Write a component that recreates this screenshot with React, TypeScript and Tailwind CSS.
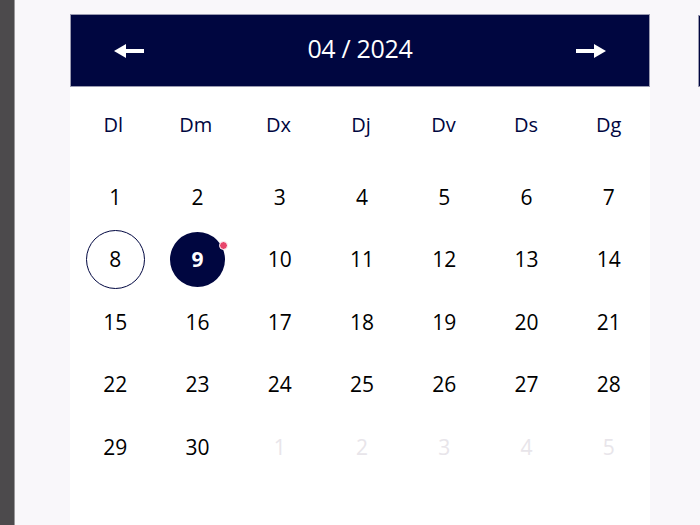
import React from "react";

const weekdays = ["Dl", "Dm", "Dx", "Dj", "Dv", "Ds", "Dg"];

type Cell = { d: number; muted?: boolean };

const cells: Cell[] = [];
for (let i = 1; i <= 30; i++) cells.push({ d: i });
for (let i = 1; i <= 5; i++) cells.push({ d: i, muted: true });

function LeftArrow() {
  return (
    <svg width="32" height="16" viewBox="0 0 32 16">
      <polygon points="0,8 12,1 12,15" fill="#fff" />
      <rect x="10" y="6" width="20" height="4" fill="#fff" />
    </svg>
  );
}

function RightArrow() {
  return (
    <svg width="32" height="16" viewBox="0 0 32 16">
      <polygon points="32,8 20,1 20,15" fill="#fff" />
      <rect x="2" y="6" width="20" height="4" fill="#fff" />
    </svg>
  );
}

export default function App() {
  return (
    <div
      className="w-[700px] h-[525px] overflow-hidden flex bg-[#f9f7fa] relative"
      style={{ fontFamily: '"Open Sans", "Noto Sans", sans-serif' }}
    >
      <div className="w-[15px] h-full bg-[#4c4a4c] border-r border-[#9a989a] shrink-0" />
      <div className="w-[55px] shrink-0" />
      <div className="w-[580px] shrink-0 flex flex-col mt-[14px]">
        <div className="h-[73px] bg-[#000640] border border-[#9a9ab0] flex items-center justify-between px-[43px]">
          <LeftArrow />
          <span className="text-white text-[25px] leading-none tracking-[-0.3px] mt-[-4px]">04 / 2024</span>
          <RightArrow />
        </div>
        <div className="flex-1 bg-white">
          <div className="grid grid-cols-7 h-[76px] items-center pl-[2px]">
            {weekdays.map((w) => (
              <div key={w} className="text-center text-[20px] text-[#000640]">
                {w}
              </div>
            ))}
          </div>
          <div className="grid grid-cols-7 auto-rows-[62.5px] pt-[3px] pl-[4px]">
            {cells.map((c, i) => {
              const isEight = !c.muted && c.d === 8;
              const isNine = !c.muted && c.d === 9;
              return (
                <div key={i} className="flex items-center justify-center">
                  {isEight ? (
                    <div className="w-[59px] h-[59px] rounded-full border-[1.5px] border-[#000640] flex items-center justify-center text-[21px] text-black">
                      8
                    </div>
                  ) : isNine ? (
                    <div className="relative w-[55px] h-[55px] rounded-full bg-[#000640] flex items-center justify-center text-[21px] font-bold text-white">
                      9
                      <span className="absolute right-[-3px] top-[9px] w-[9px] h-[9px] rounded-full bg-[#e8456b] border border-white" />
                    </div>
                  ) : (
                    <span className={"text-[21px] " + (c.muted ? "text-[#e8e5ea]" : "text-black")}>{c.d}</span>
                  )}
                </div>
              );
            })}
          </div>
        </div>
      </div>
      <div className="w-[48px] shrink-0" />
      <div className="w-[10px] shrink-0 mt-[15px] h-[72px] bg-[#000640] border border-[#9a9ab0]" />
    </div>
  );
}
